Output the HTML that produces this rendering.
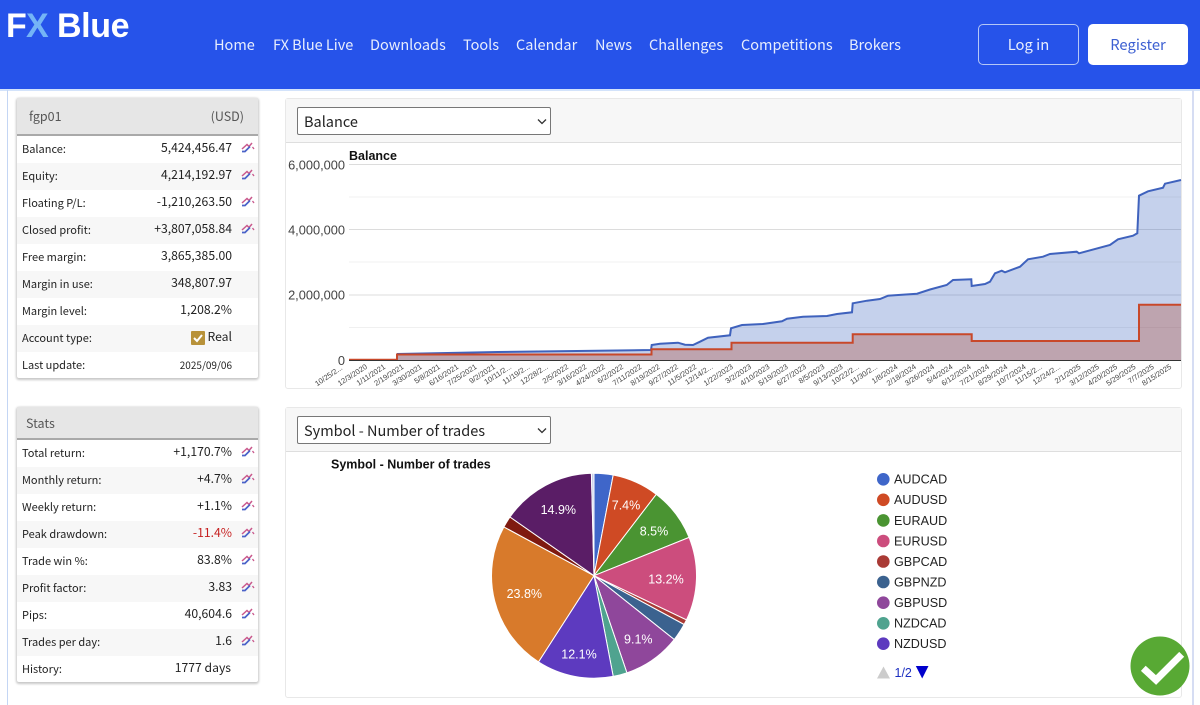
<!DOCTYPE html>
<html lang="en"><head><meta charset="utf-8"><title>FX Blue</title>
<style>
*{box-sizing:border-box}
html,body{margin:0;padding:0;width:1200px;height:705px;overflow:hidden;background:#fff}
body{position:relative;font-family:"Noto Sans CJK JP","Liberation Sans",sans-serif;color:#222}
.a{position:absolute;white-space:nowrap}
.hdr{left:0;top:0;width:1200px;height:89px;background:#2653ea}
.nav{top:34px;height:22px;line-height:22px;font-size:14.5px;color:#e8eefd}
.panel{position:absolute;left:17px;width:241px;background:#fff;border-radius:2px;box-shadow:0 1px 2px 1px rgba(0,0,0,.22)}
.ph{position:absolute;left:0;top:0;width:241px;background:#e6e6e6;border-bottom:2px solid #a9a9a9;font-size:12.5px;color:#555}
.r{position:absolute;left:0;width:241px;height:27px;line-height:25px;font-size:11px;color:#222}
.r.s{background:#f7f7f7}
.r b{position:absolute;left:5px;top:1px;font-weight:400}
.r i{position:absolute;right:26px;top:-1px;font-style:normal;font-size:12.2px}
.r svg{position:absolute;left:224px;top:6px}
.box{position:absolute;left:285px;width:897px;height:291px;border:1px solid #e8e8e8;border-radius:3px;background:#fff}
.bh{position:absolute;left:0;top:0;width:895px;height:44px;background:#f7f7f7;border-bottom:1px solid #dedede}
.sel{position:absolute;left:11px;top:8px;width:254px;height:28px;background:#fff;border:1px solid #777;border-radius:2px;font-size:14.5px;line-height:28px;padding-left:6px;color:#222}
.sel svg{position:absolute;right:3px;top:10px}
</style></head><body>
<div class="a hdr"></div>
<div class="a" style="left:0;top:89px;width:1200px;height:2px;background:#d3e3fb"></div>
<div class="a" style="left:7px;top:90px;width:1px;height:615px;background:#c4d6f4"></div>
<div class="a" style="left:1192px;top:90px;width:1.5px;height:615px;background:#d6ddf3"></div>
<div class="a" style="left:6px;top:6px;font:700 34px/40px 'Liberation Sans',sans-serif;color:#fff;letter-spacing:-.8px"><span>F</span><span style="color:#74b4f6">X</span></div>
<div class="a" style="left:57px;top:6px;font:700 34px/40px 'Liberation Sans',sans-serif;color:#fff;letter-spacing:-.4px">Blue</div>
<div class="a nav" style="left:214px">Home</div>
<div class="a nav" style="left:273px">FX Blue Live</div>
<div class="a nav" style="left:370px">Downloads</div>
<div class="a nav" style="left:463px">Tools</div>
<div class="a nav" style="left:516px">Calendar</div>
<div class="a nav" style="left:595px">News</div>
<div class="a nav" style="left:649px">Challenges</div>
<div class="a nav" style="left:741px">Competitions</div>
<div class="a nav" style="left:849px">Brokers</div>
<div class="a" style="left:978px;top:24px;width:101px;height:41px;border:1px solid #b5c7f6;border-radius:5px;color:#e8eefd;font-size:14.8px;line-height:39px;text-align:center">Log in</div>
<div class="a" style="left:1088px;top:24px;width:100px;height:41px;background:#fff;border-radius:5px;color:#3d60d2;font-size:14.8px;line-height:41px;text-align:center">Register</div>

<div class="panel" style="top:98px;height:280px">
<div class="ph" style="height:38px;line-height:36px"><span class="a" style="left:12px">fgp01</span><span class="a" style="right:14px">(USD)</span></div>
<div class="r" style="top:38px"><b>Balance:</b><i>5,424,456.47</i><svg width="14" height="11" viewBox="0 0 14 11"><path d="M1 7 6 2.500 8 4.500 11 1" fill="none" stroke="#c9588c" stroke-width="1.500"/><path d="M1 9.500H4L9 4.500" fill="none" stroke="#4a62c8" stroke-width="1.700"/><path d="M11.500 5 13 7" fill="none" stroke="#c9588c" stroke-width="1.300"/></svg></div>
<div class="r s" style="top:65px"><b>Equity:</b><i>4,214,192.97</i><svg width="14" height="11" viewBox="0 0 14 11"><path d="M1 7 6 2.500 8 4.500 11 1" fill="none" stroke="#c9588c" stroke-width="1.500"/><path d="M1 9.500H4L9 4.500" fill="none" stroke="#4a62c8" stroke-width="1.700"/><path d="M11.500 5 13 7" fill="none" stroke="#c9588c" stroke-width="1.300"/></svg></div>
<div class="r" style="top:92px"><b>Floating P/L:</b><i>-1,210,263.50</i><svg width="14" height="11" viewBox="0 0 14 11"><path d="M1 7 6 2.500 8 4.500 11 1" fill="none" stroke="#c9588c" stroke-width="1.500"/><path d="M1 9.500H4L9 4.500" fill="none" stroke="#4a62c8" stroke-width="1.700"/><path d="M11.500 5 13 7" fill="none" stroke="#c9588c" stroke-width="1.300"/></svg></div>
<div class="r s" style="top:119px"><b>Closed profit:</b><i>+3,807,058.84</i><svg width="14" height="11" viewBox="0 0 14 11"><path d="M1 7 6 2.500 8 4.500 11 1" fill="none" stroke="#c9588c" stroke-width="1.500"/><path d="M1 9.500H4L9 4.500" fill="none" stroke="#4a62c8" stroke-width="1.700"/><path d="M11.500 5 13 7" fill="none" stroke="#c9588c" stroke-width="1.300"/></svg></div>
<div class="r" style="top:146px"><b>Free margin:</b><i>3,865,385.00</i></div>
<div class="r s" style="top:173px"><b>Margin in use:</b><i>348,807.97</i></div>
<div class="r" style="top:200px"><b>Margin level:</b><i>1,208.2%</i></div>
<div class="r s" style="top:227px"><b>Account type:</b><i style="right:26px">Real</i><svg style="left:174px;top:6px" width="14" height="14" viewBox="0 0 14 14"><rect width="14" height="14" rx="1" fill="#b8923a"/><path d="M3 7 6 10 11 4" fill="none" stroke="#fff" stroke-width="2"/></svg></div>
<div class="r" style="top:254px"><b>Last update:</b><i style="font-size:10px;top:0">2025/09/06</i></div>
</div>

<div class="panel" style="top:407px;height:275px">
<div class="ph" style="height:33px;line-height:32px"><span class="a" style="left:9px">Stats</span></div>
<div class="r" style="top:33px"><b>Total return:</b><i>+1,170.7%</i><svg width="14" height="11" viewBox="0 0 14 11"><path d="M1 7 6 2.500 8 4.500 11 1" fill="none" stroke="#c9588c" stroke-width="1.500"/><path d="M1 9.500H4L9 4.500" fill="none" stroke="#4a62c8" stroke-width="1.700"/><path d="M11.500 5 13 7" fill="none" stroke="#c9588c" stroke-width="1.300"/></svg></div>
<div class="r s" style="top:60px"><b>Monthly return:</b><i>+4.7%</i><svg width="14" height="11" viewBox="0 0 14 11"><path d="M1 7 6 2.500 8 4.500 11 1" fill="none" stroke="#c9588c" stroke-width="1.500"/><path d="M1 9.500H4L9 4.500" fill="none" stroke="#4a62c8" stroke-width="1.700"/><path d="M11.500 5 13 7" fill="none" stroke="#c9588c" stroke-width="1.300"/></svg></div>
<div class="r" style="top:87px"><b>Weekly return:</b><i>+1.1%</i><svg width="14" height="11" viewBox="0 0 14 11"><path d="M1 7 6 2.500 8 4.500 11 1" fill="none" stroke="#c9588c" stroke-width="1.500"/><path d="M1 9.500H4L9 4.500" fill="none" stroke="#4a62c8" stroke-width="1.700"/><path d="M11.500 5 13 7" fill="none" stroke="#c9588c" stroke-width="1.300"/></svg></div>
<div class="r s" style="top:114px"><b>Peak drawdown:</b><i style="color:#c62020">-11.4%</i><svg width="14" height="11" viewBox="0 0 14 11"><path d="M1 7 6 2.500 8 4.500 11 1" fill="none" stroke="#c9588c" stroke-width="1.500"/><path d="M1 9.500H4L9 4.500" fill="none" stroke="#4a62c8" stroke-width="1.700"/><path d="M11.500 5 13 7" fill="none" stroke="#c9588c" stroke-width="1.300"/></svg></div>
<div class="r" style="top:141px"><b>Trade win %:</b><i>83.8%</i><svg width="14" height="11" viewBox="0 0 14 11"><path d="M1 7 6 2.500 8 4.500 11 1" fill="none" stroke="#c9588c" stroke-width="1.500"/><path d="M1 9.500H4L9 4.500" fill="none" stroke="#4a62c8" stroke-width="1.700"/><path d="M11.500 5 13 7" fill="none" stroke="#c9588c" stroke-width="1.300"/></svg></div>
<div class="r s" style="top:168px"><b>Profit factor:</b><i>3.83</i><svg width="14" height="11" viewBox="0 0 14 11"><path d="M1 7 6 2.500 8 4.500 11 1" fill="none" stroke="#c9588c" stroke-width="1.500"/><path d="M1 9.500H4L9 4.500" fill="none" stroke="#4a62c8" stroke-width="1.700"/><path d="M11.500 5 13 7" fill="none" stroke="#c9588c" stroke-width="1.300"/></svg></div>
<div class="r" style="top:195px"><b>Pips:</b><i>40,604.6</i><svg width="14" height="11" viewBox="0 0 14 11"><path d="M1 7 6 2.500 8 4.500 11 1" fill="none" stroke="#c9588c" stroke-width="1.500"/><path d="M1 9.500H4L9 4.500" fill="none" stroke="#4a62c8" stroke-width="1.700"/><path d="M11.500 5 13 7" fill="none" stroke="#c9588c" stroke-width="1.300"/></svg></div>
<div class="r s" style="top:222px"><b>Trades per day:</b><i>1.6</i><svg width="14" height="11" viewBox="0 0 14 11"><path d="M1 7 6 2.500 8 4.500 11 1" fill="none" stroke="#c9588c" stroke-width="1.500"/><path d="M1 9.500H4L9 4.500" fill="none" stroke="#4a62c8" stroke-width="1.700"/><path d="M11.500 5 13 7" fill="none" stroke="#c9588c" stroke-width="1.300"/></svg></div>
<div class="r" style="top:249px"><b>History:</b><i style="right:27px">1777 days</i></div>
</div>

<div class="box" style="top:98px"><div class="bh"><div class="sel">Balance<svg width="10" height="7" viewBox="0 0 10 7"><path d="M1 1.500 5 5.500 9 1.500" fill="none" stroke="#333" stroke-width="1.300"/></svg></div></div></div>
<div class="box" style="top:407px"><div class="bh"><div class="sel">Symbol - Number of trades<svg width="10" height="7" viewBox="0 0 10 7"><path d="M1 1.500 5 5.500 9 1.500" fill="none" stroke="#333" stroke-width="1.300"/></svg></div></div></div>

<svg class="a" style="left:0;top:0" width="1200" height="705" viewBox="0 0 1200 705" font-family="'Liberation Sans',sans-serif">
<g stroke-width="1">
<path d="M349 164.500H1181M349 229.500H1181M349 295H1181" stroke="#dcdcdc"/>
<path d="M349 197H1181M349 262H1181M349 327.500H1181" stroke="#f0f0f0"/>
</g>
<path fill="#3f66c0" fill-opacity=".3" d="M349 360.500 397 360 397 354 498 352 651 350 651.700 345 660 343.700 678 342.700 685 344.700 693 345 700 341.700 708 337.700 730 335.300 731 328.300 742 325 763 324 782 321.300 787 318.700 803 316.700 827 316 837 314 852 312.300 852.700 303.300 867 300.700 880 299 888 295.700 917 293.700 930 289.500 946.700 285 953 280 971.300 279.300 971.700 286 985 284 990 281.700 995 273.300 1001.700 270.700 1005 272.300 1020 266.700 1028 259.300 1043 256.700 1050 254 1076.700 251.700 1079 253.300 1110 245 1118 239.300 1133 235.700 1137.300 233.300 1139 195.700 1148 191.300 1163 187.700 1165 183.700 1181 180V360.500Z"/>
<path fill="#b03a20" fill-opacity=".3" d="M349 360.500 397 360.500V354.500H651.500V349.300H731.500V342.700H852.700V334.300H971.700V341H1139V304.700H1181V360.500Z"/>
<path fill="none" stroke="#3f62bd" stroke-width="2" d="M397 354 498 352 651 350 651.700 345 660 343.700 678 342.700 685 344.700 693 345 700 341.700 708 337.700 730 335.300 731 328.300 742 325 763 324 782 321.300 787 318.700 803 316.700 827 316 837 314 852 312.300 852.700 303.300 867 300.700 880 299 888 295.700 917 293.700 930 289.500 946.700 285 953 280 971.300 279.300 971.700 286 985 284 990 281.700 995 273.300 1001.700 270.700 1005 272.300 1020 266.700 1028 259.300 1043 256.700 1050 254 1076.700 251.700 1079 253.300 1110 245 1118 239.300 1133 235.700 1137.300 233.300 1139 195.700 1148 191.300 1163 187.700 1165 183.700 1181 180"/>
<path fill="none" stroke="#c8482a" stroke-width="2" d="M349 359.800H397V354.500H651.500V349.300H731.500V342.700H852.700V334.300H971.700V341H1139V304.700H1181"/>
<path d="M349 360.500H1181" stroke="#333" stroke-width="1"/>
<text x="349" y="160" font-size="12.500" font-weight="700" fill="#111">Balance</text>
<g font-size="12.800" fill="#444" text-anchor="end">
<text x="345" y="169.500">6,000,000</text><text x="345" y="234.500">4,000,000</text><text x="345" y="299.500">2,000,000</text><text x="345" y="365">0</text>
</g>
<g font-size="7.500" fill="#444" text-anchor="end">
<text transform="translate(343 369) rotate(-34)">10/25/2...</text>
<text transform="translate(367.700 368) rotate(-33)">12/3/2020</text>
<text transform="translate(386 368) rotate(-33)">1/11/2021</text>
<text transform="translate(404.300 368) rotate(-33)">2/19/2021</text>
<text transform="translate(422.500 368) rotate(-33)">3/30/2021</text>
<text transform="translate(440.800 368) rotate(-33)">5/8/2021</text>
<text transform="translate(459.100 368) rotate(-33)">6/16/2021</text>
<text transform="translate(477.400 368) rotate(-33)">7/25/2021</text>
<text transform="translate(495.700 368) rotate(-33)">9/2/2021</text>
<text transform="translate(512 368) rotate(-33)">10/11/2...</text>
<text transform="translate(530.300 368) rotate(-33)">11/19/2...</text>
<text transform="translate(548.600 368) rotate(-33)">12/28/2...</text>
<text transform="translate(569 368) rotate(-33)">2/5/2022</text>
<text transform="translate(587.300 368) rotate(-33)">3/16/2022</text>
<text transform="translate(605.600 368) rotate(-33)">4/24/2022</text>
<text transform="translate(623.900 368) rotate(-33)">6/2/2022</text>
<text transform="translate(642.200 368) rotate(-33)">7/11/2022</text>
<text transform="translate(660.500 368) rotate(-33)">8/19/2022</text>
<text transform="translate(678.800 368) rotate(-33)">9/27/2022</text>
<text transform="translate(697.100 368) rotate(-33)">11/5/2022</text>
<text transform="translate(713.400 368) rotate(-33)">12/14/2...</text>
<text transform="translate(733.600 368) rotate(-33)">1/22/2023</text>
<text transform="translate(751.900 368) rotate(-33)">3/2/2023</text>
<text transform="translate(770.200 368) rotate(-33)">4/10/2023</text>
<text transform="translate(788.500 368) rotate(-33)">5/19/2023</text>
<text transform="translate(806.800 368) rotate(-33)">6/27/2023</text>
<text transform="translate(825.100 368) rotate(-33)">8/5/2023</text>
<text transform="translate(843.400 368) rotate(-33)">9/13/2023</text>
<text transform="translate(859.700 368) rotate(-33)">10/22/2...</text>
<text transform="translate(878 368) rotate(-33)">11/30/2...</text>
<text transform="translate(898.300 368) rotate(-33)">1/8/2024</text>
<text transform="translate(916.600 368) rotate(-33)">2/18/2024</text>
<text transform="translate(934.900 368) rotate(-33)">3/26/2024</text>
<text transform="translate(953.200 368) rotate(-33)">5/4/2024</text>
<text transform="translate(971.500 368) rotate(-33)">6/12/2024</text>
<text transform="translate(989.800 368) rotate(-33)">7/21/2024</text>
<text transform="translate(1008.100 368) rotate(-33)">8/29/2024</text>
<text transform="translate(1026.400 368) rotate(-33)">10/7/2024</text>
<text transform="translate(1042.700 368) rotate(-33)">11/15/2...</text>
<text transform="translate(1061 368) rotate(-33)">12/24/2...</text>
<text transform="translate(1081.300 368) rotate(-33)">2/1/2025</text>
<text transform="translate(1099.600 368) rotate(-33)">3/12/2025</text>
<text transform="translate(1117.900 368) rotate(-33)">4/20/2025</text>
<text transform="translate(1136.200 368) rotate(-33)">5/29/2025</text>
<text transform="translate(1154.500 368) rotate(-33)">7/7/2025</text>
<text transform="translate(1172 368) rotate(-33)">8/15/2025</text>
</g>

<text x="331" y="468.500" font-size="12.500" font-weight="700" fill="#111">Symbol - Number of trades</text>
<g stroke="#fff" stroke-width="1">
<path fill="#3f66c9" d="M594 575.700V473.200A102.500 102.500 0 0 1 613.200 475Z"/>
<path fill="#cf4a24" d="M594 575.700 613.200 475A102.500 102.500 0 0 1 656.300 494.300Z"/>
<path fill="#4a9432" d="M594 575.700 656.300 494.300A102.500 102.500 0 0 1 689.100 537.400Z"/>
<path fill="#cc4d7d" d="M594 575.700 689.100 537.400A102.500 102.500 0 0 1 686.500 619.900Z"/>
<path fill="#a93a35" d="M594 575.700 686.500 619.900A102.500 102.500 0 0 1 684.100 624.500Z"/>
<path fill="#3b628f" d="M594 575.700 684.100 624.500A102.500 102.500 0 0 1 674.200 639.500Z"/>
<path fill="#8f479b" d="M594 575.700 674.200 639.500A102.500 102.500 0 0 1 626.900 672.800Z"/>
<path fill="#4fa38f" d="M594 575.700 626.900 672.800A102.500 102.500 0 0 1 613.200 676.400Z"/>
<path fill="#5d3abf" d="M594 575.700 613.200 676.400A102.500 102.500 0 0 1 538.500 661.900Z"/>
<path fill="#d87a2b" d="M594 575.700 538.500 661.900A102.500 102.500 0 0 1 503.900 526.900Z"/>
<path fill="#7f1a10" d="M594 575.700 503.900 526.900A102.500 102.500 0 0 1 510 517Z"/>
<path fill="#5a1d66" d="M594 575.700 510 517A102.500 102.500 0 0 1 591.400 473.200Z"/>
<path fill="#c8d0ea" d="M594 575.700 591.400 473.200A102.500 102.500 0 0 1 594 473.200Z"/>
</g>
<g font-size="12.500" fill="#fff" text-anchor="middle">
<text x="558.300" y="514">14.9%</text><text x="626" y="509.300">7.4%</text><text x="654" y="535.300">8.5%</text><text x="666" y="583.300">13.2%</text><text x="638.300" y="643.300">9.1%</text><text x="579" y="658.300">12.1%</text><text x="524.300" y="598">23.8%</text>
</g>
<g font-size="12.600" fill="#222">
<circle cx="883.300" cy="479.300" r="6.300" fill="#3f66c9"/><text x="894" y="483.700">AUDCAD</text>
<circle cx="883.300" cy="499.800" r="6.300" fill="#cf4a24"/><text x="894" y="504.200">AUDUSD</text>
<circle cx="883.300" cy="520.400" r="6.300" fill="#4a9432"/><text x="894" y="524.800">EURAUD</text>
<circle cx="883.300" cy="541" r="6.300" fill="#cc4d7d"/><text x="894" y="545.400">EURUSD</text>
<circle cx="883.300" cy="561.500" r="6.300" fill="#a93a35"/><text x="894" y="565.900">GBPCAD</text>
<circle cx="883.300" cy="582" r="6.300" fill="#3b628f"/><text x="894" y="586.400">GBPNZD</text>
<circle cx="883.300" cy="602.700" r="6.300" fill="#8f479b"/><text x="894" y="607.100">GBPUSD</text>
<circle cx="883.300" cy="623.300" r="6.300" fill="#4fa38f"/><text x="894" y="627.700">NZDCAD</text>
<circle cx="883.300" cy="643.700" r="6.300" fill="#5d3abf"/><text x="894" y="648.100">NZDUSD</text>
</g>
<path d="M877 678.500 883.500 666.500 890 678.500Z" fill="#ccc"/>
<text x="894.500" y="677" font-size="12.500" fill="#1c2fc0">1/2</text>
<path d="M915.800 666H928.500L922.200 678.500Z" fill="#0000cc"/>
<circle cx="1160" cy="666" r="29.500" fill="#58a934"/>
<path d="M1143.300 668.300 1156 680 1181.700 654.300" fill="none" stroke="#fff" stroke-width="7"/>
</svg>
</body></html>
